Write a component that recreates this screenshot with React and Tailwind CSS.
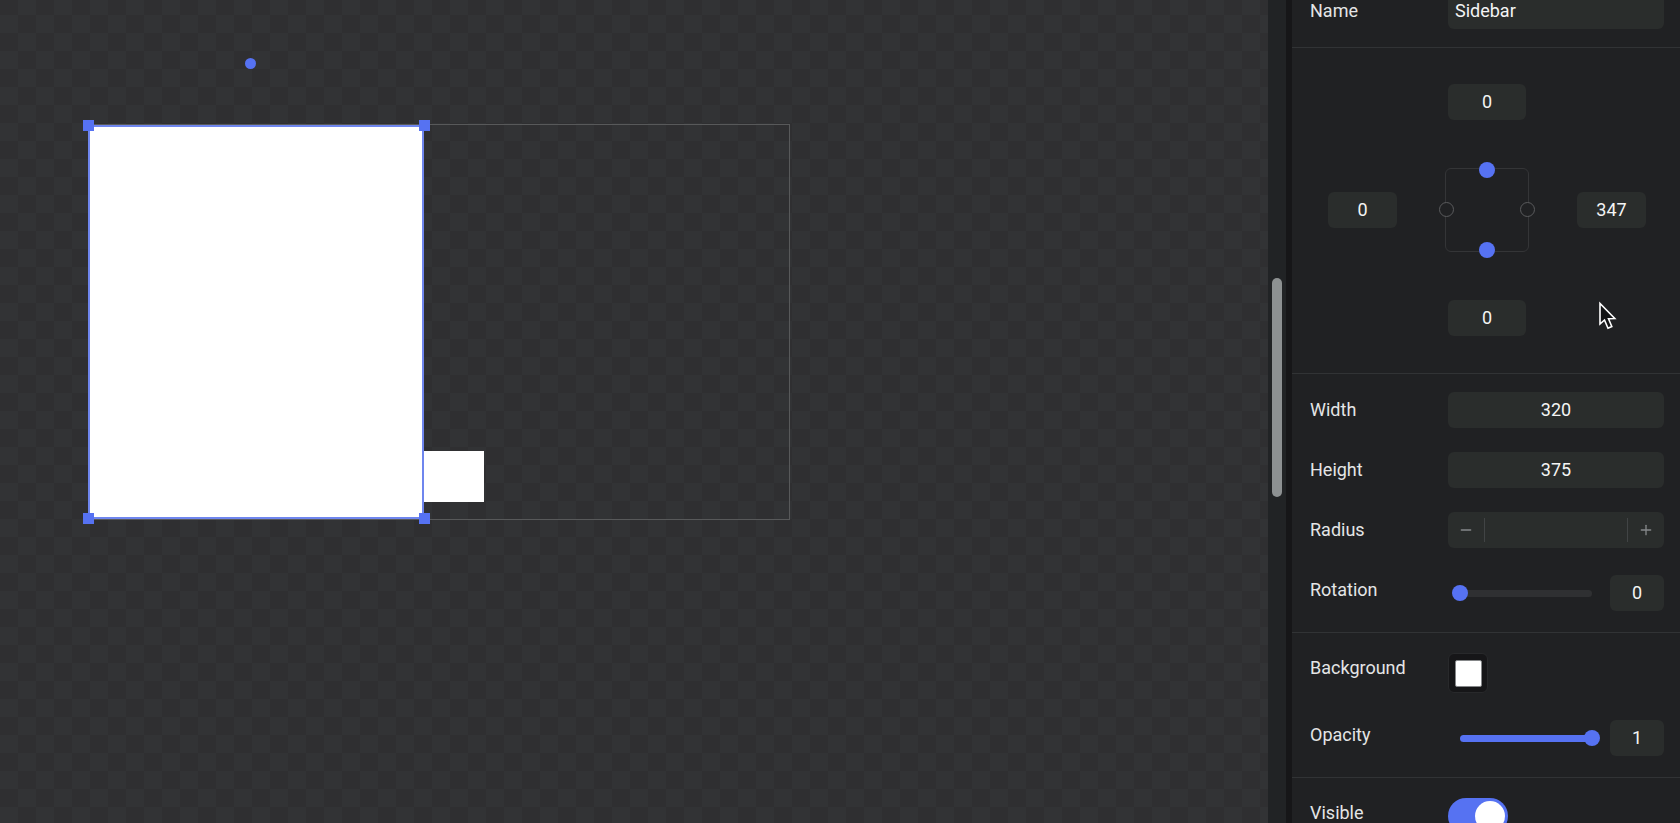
import { Minus, Plus } from 'lucide-react'

const FIELD = 'h-9 rounded-md bg-[#2a2d2c] pb-0.5 text-center text-lg text-[#f4f4f4] outline-none'

function Row({ label, id, children }) {
  return (
    <div className="flex items-start">
      <label htmlFor={id} className="w-[138px] shrink-0 leading-9">{label}</label>
      {children}
    </div>
  )
}

function Slider({ id, value, max, step }) {
  return (
    <div className="mx-1 grid flex-1 items-center">
      <div className="col-start-1 row-start-1 mx-2 h-[7px] overflow-hidden rounded-full bg-[#2f3032]">
        <div className="h-full bg-[#5672f2]" style={{ width: `${(value / max) * 100}%` }} />
      </div>
      <input
        id={id}
        type="range"
        min="0"
        max={max}
        step={step}
        defaultValue={value}
        className="col-start-1 row-start-1 h-4 w-full appearance-none bg-transparent [&::-webkit-slider-thumb]:size-4 [&::-webkit-slider-thumb]:appearance-none [&::-webkit-slider-thumb]:rounded-full [&::-webkit-slider-thumb]:bg-[#5672f2]"
      />
    </div>
  )
}

function SliderRow({ label, id, value, max, step }) {
  return (
    <Row label={label} id={id}>
      <div className="flex flex-1 items-center pt-[3px]">
        <Slider id={id} value={value} max={max} step={step} />
        <input aria-label={`${label} value`} defaultValue={value} className={`${FIELD} ml-[6px] w-[54px]`} />
      </div>
    </Row>
  )
}

function Canvas() {
  return (
    <main className="relative flex-1 overflow-hidden bg-[conic-gradient(#2f2f31_25%,#323335_0_50%,#2f2f31_0_75%,#323335_0)] bg-[length:36px_36px] bg-[position:0_15px]">
      {/* artboard */}
      <div className="absolute left-[88px] top-[124px] h-[396px] w-[702px] border border-[#58595a]" />
      <div className="absolute left-[424px] top-[451px] h-[51px] w-[60px] bg-white" />

      {/* selected layer */}
      <div className="absolute left-[88px] top-[125px] h-[394px] w-[336px] border-2 border-[#6f86ee] bg-white" />
      <button aria-label="Rotate" className="absolute left-[245px] top-[58px] size-[11px] rounded-full bg-[#5672f2]" />
      <button aria-label="Resize top left" className="absolute left-[83px] top-[120px] size-[11px] bg-[#5672f2]" />
      <button aria-label="Resize top right" className="absolute left-[419px] top-[120px] size-[11px] bg-[#5672f2]" />
      <button aria-label="Resize bottom left" className="absolute left-[83px] top-[513px] size-[11px] bg-[#5672f2]" />
      <button aria-label="Resize bottom right" className="absolute left-[419px] top-[513px] size-[11px] bg-[#5672f2]" />
    </main>
  )
}

function Constraints() {
  return (
    <section className="relative flex flex-col items-center border-b border-[#313335] pt-9 pb-[37px] pl-[2px]">
      <input aria-label="Top" defaultValue="0" className={`${FIELD} w-[78px]`} />
      <div className="my-12 flex w-[318px] items-center justify-between">
        <input aria-label="Left" defaultValue="0" className={`${FIELD} w-[69px]`} />
        <div className="relative size-[84px] rounded-md border border-[#343537]">
          <button aria-label="Pin top" className="absolute -top-[7px] left-[33px] size-4 rounded-full bg-[#5672f2]" />
          <button aria-label="Pin bottom" className="absolute -bottom-[7px] left-[33px] size-4 rounded-full bg-[#5672f2]" />
          <button aria-label="Pin left" className="absolute -left-[7px] top-[33px] size-[15px] rounded-full border border-[#5a5b5d] bg-[#202123]" />
          <button aria-label="Pin right" className="absolute -right-[7px] top-[33px] size-[15px] rounded-full border border-[#5a5b5d] bg-[#202123]" />
        </div>
        <input aria-label="Right" defaultValue="347" className={`${FIELD} w-[69px]`} />
      </div>
      <input aria-label="Bottom" defaultValue="0" className={`${FIELD} w-[78px]`} />
      <svg className="absolute right-[62px] bottom-[42px]" width="20" height="30" viewBox="0 0 20 30">
        <path d="M2 2.500 L2 23 L6.500 19 L10 27.200 L13.800 25.500 L10.500 17.800 L16.800 17.500 Z" fill="#121314" stroke="#fff" strokeWidth="1.600" />
      </svg>
    </section>
  )
}

export default function App() {
  return (
    <div className="flex h-screen overflow-hidden bg-[#202123] font-['Roboto',sans-serif] text-lg text-[#e4e5e6]">
      <Canvas />
      <div className="flex w-[18px] justify-center bg-[#212325] pt-[278px]">
        <div className="h-[219px] w-[10px] rounded-full bg-[#8d9192]" />
      </div>
      <aside className="w-[394px] shrink-0 border-l-6 border-[#161618]">
        <section className="-mt-[7px] border-b border-[#313335] pb-[18px] pl-[18px] pr-4">
          <Row label="Name" id="name">
            <input id="name" defaultValue="Sidebar" className="h-9 min-w-0 flex-1 rounded-md bg-[#2a2d2c] px-[7px] pb-0.5 text-[#f4f4f4] outline-none" />
          </Row>
        </section>

        <Constraints />

        <section className="flex flex-col gap-6 border-b border-[#313335] pt-[18px] pb-[21px] pl-[18px] pr-4">
          <Row label="Width" id="width">
            <input id="width" defaultValue="320" className={`${FIELD} min-w-0 flex-1`} />
          </Row>
          <Row label="Height" id="height">
            <input id="height" defaultValue="375" className={`${FIELD} min-w-0 flex-1`} />
          </Row>
          <Row label="Radius" id="radius">
            <div className="flex h-9 min-w-0 flex-1 items-center rounded-md bg-[#2a2d2c] text-[#85888a]">
              <button aria-label="Decrease radius" className="flex h-6 w-9 shrink-0 items-center justify-center"><Minus size={16} strokeWidth={2} /></button>
              <input id="radius" className="h-6 w-full min-w-0 border-x border-[#414445] text-center outline-none" />
              <button aria-label="Increase radius" className="flex h-6 w-9 shrink-0 items-center justify-center"><Plus size={16} strokeWidth={2} /></button>
            </div>
          </Row>
          <SliderRow label="Rotation" id="rotation" value={0} max={360} step={1} />
        </section>

        <section className="flex flex-col gap-6 border-b border-[#313335] pt-[17px] pb-[21px] pl-[18px] pr-4">
          <Row label="Background" id="background">
            <div className="pt-[3px]">
              <button id="background" className="flex size-10 items-center justify-center rounded-md border border-[#28292b] bg-[#161618]">
                <span className="size-[27px] rounded-xs border border-[#858789] bg-white" />
              </button>
            </div>
          </Row>
          <SliderRow label="Opacity" id="opacity" value={1} max={1} step={0.01} />
        </section>

        <section className="pt-[17px] pb-5 pl-[18px] pr-4">
          <Row label="Visible" id="visible">
            <div className="pt-[3px]">
              <input
                id="visible"
                type="checkbox"
                role="switch"
                defaultChecked
                className="flex h-9 w-[60px] appearance-none items-center rounded-full bg-[#3a3c3e] p-[3px] before:size-[30px] before:rounded-full before:bg-white checked:justify-end checked:bg-[#5672f2]"
              />
            </div>
          </Row>
        </section>
      </aside>
    </div>
  )
}
